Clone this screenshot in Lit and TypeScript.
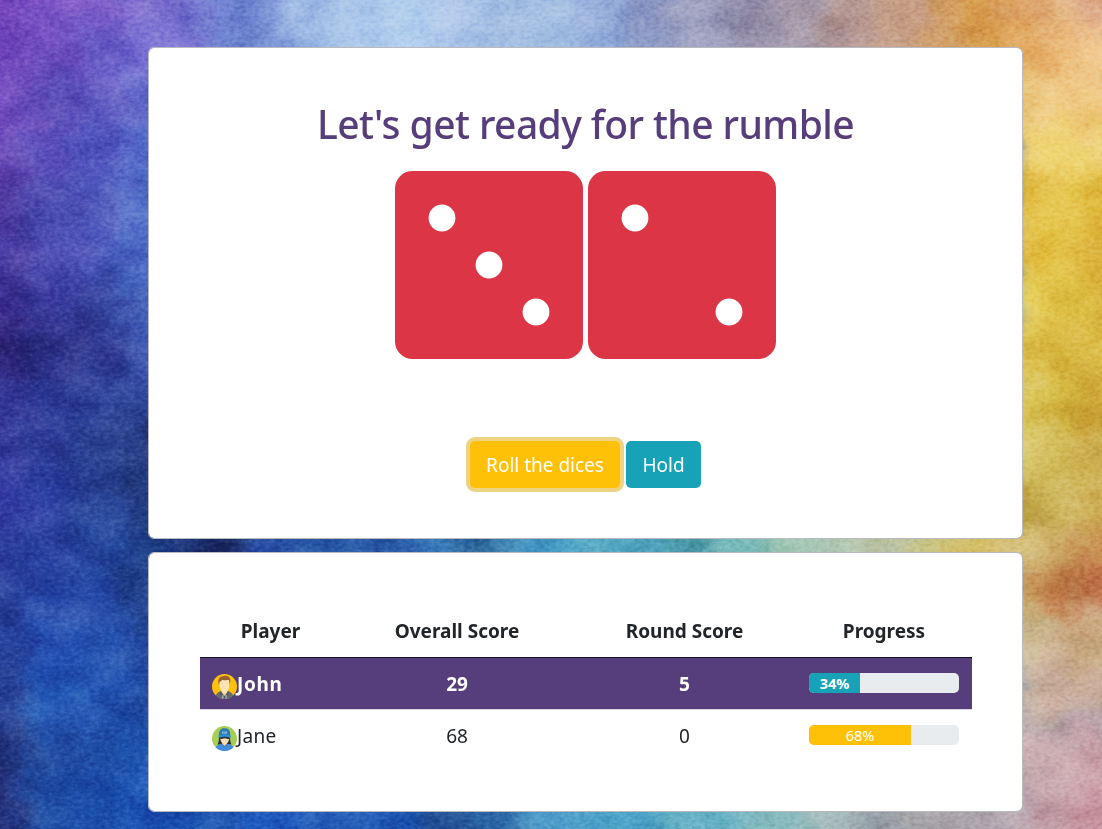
import { LitElement, html, svg, css } from "lit";
import { customElement, property } from "lit/decorators.js";
import { classMap } from "lit/directives/class-map.js";

// Colour washes: each entry is a row of pigment samples at a given height.
const LEFT_X = [0, 50, 100, 150];
const LEFT: [number, string[]][] = [
  [0, ["#7040b8", "#8358c8", "#8464cc", "#8074d0"]],
  [50, ["#6c40b8", "#7050c0", "#6a5cc6", "#7d74d6"]],
  [100, ["#7c54c4", "#5848b4", "#5a54be", "#6068c8"]],
  [150, ["#6a48b8", "#5c50bc", "#5458c0", "#5870cc"]],
  [200, ["#4e38a0", "#5050b4", "#4a54b8", "#5878cc"]],
  [250, ["#4a3ca4", "#5050b4", "#4a58bc", "#5070c8"]],
  [300, ["#3c2c90", "#38389c", "#3846a2", "#4464bc"]],
  [350, ["#30267c", "#2c2e84", "#303a92", "#3c54b0"]],
  [400, ["#303294", "#2c3a98", "#2c4098", "#304a9c"]],
  [450, ["#3840a0", "#2c3c98", "#2a4292", "#22367a"]],
  [500, ["#343ca4", "#2e42a4", "#2a4698", "#223a80"]],
  [550, ["#2c3c9c", "#2a42a0", "#2648a0", "#1e4088"]],
  [600, ["#2a429c", "#2648a8", "#264aa8", "#22428c"]],
  [650, ["#26429c", "#2450b4", "#2452b0", "#2046a0"]],
  [700, ["#223a90", "#245ab8", "#2456b4", "#1e489e"]],
  [750, ["#202f78", "#244ea4", "#2050a8", "#1c54b0"]],
  [800, ["#222e78", "#2050a8", "#1c50ae", "#1c52b4"]],
];
const RIGHT_X = [1020, 1060, 1100];
const RIGHT: [number, string[]][] = [
  [0, ["#dca468", "#e4b888", "#d8a080"]],
  [50, ["#e0a458", "#ecbe7c", "#f0c890"]],
  [100, ["#e8c070", "#f0d090", "#eec880"]],
  [150, ["#ecd070", "#f0d878", "#ecd070"]],
  [200, ["#e0b838", "#e4c64c", "#e0ba3c"]],
  [250, ["#e6c654", "#e2bf3e", "#dab036"]],
  [300, ["#ead664", "#e0c448", "#dab640"]],
  [350, ["#e0c454", "#d6b43c", "#dabc46"]],
  [400, ["#dac456", "#d6ba44", "#cea636"]],
  [450, ["#daca6c", "#d2ba56", "#ccae4e"]],
  [500, ["#c4aa48", "#d0b860", "#ccac50"]],
  [550, ["#d4c078", "#cca864", "#c89050"]],
  [590, ["#c8a464", "#c48450", "#c07048"]],
  [640, ["#c8b890", "#ceb490", "#c8aa80"]],
  [690, ["#ccb8a8", "#ccb0a0", "#ccb0a0"]],
  [750, ["#ccb0b0", "#ccacb0", "#c8a0a8"]],
  [800, ["#bca8b0", "#c49ea8", "#cc9ca8"]],
];
const TOP: [number, string][] = [
  [180, "#7068cc"], [220, "#7084d0"], [260, "#7890d4"], [300, "#9cb8e4"], [350, "#a8c4e8"],
  [400, "#b0ccec"], [450, "#b0c8ea"], [500, "#a4bee2"], [550, "#a0bce0"], [600, "#98b0dc"],
  [650, "#8c98c4"], [700, "#a0a2c0"], [750, "#948eaa"], [800, "#a498a8"], [850, "#b89c98"],
  [900, "#c49c84"], [950, "#d09c60"], [985, "#dca24c"],
];
const MIDDLE: [number, string][] = [
  [180, "#1c3884"], [220, "#1a2862"], [260, "#2448a0"], [330, "#2656a6"], [400, "#2c60ac"],
  [440, "#3478b8"], [475, "#2a6498"], [515, "#4090c0"], [560, "#48a0c4"], [620, "#50a4c0"],
  [680, "#4c9cac"], [735, "#74b8b8"], [780, "#a0c8b8"], [830, "#a8c4b0"], [880, "#bec6a8"],
  [940, "#c8c480"], [985, "#d4b858"],
];
const BOTTOM: [number, string][] = [
  [180, "#1c58b8"], [220, "#1c50ac"], [260, "#205cc0"], [330, "#2056b4"], [400, "#205cb8"],
  [450, "#1e4a90"], [500, "#2c68a8"], [550, "#4898c8"], [620, "#4ca4c8"], [700, "#64b0c4"],
  [780, "#84b8bc"], [830, "#a0b8b8"], [880, "#949ca6"], [930, "#a8a4a8"], [985, "#a8a0a8"],
];

const patch = (x: number, y: number, w: number, h: number, fill: string) =>
  svg`<rect x=${x} y=${y} width=${w} height=${h} fill=${fill}></rect>`;

const band = (y: number, h: number, stops: [number, string][]) =>
  stops.map(([x, fill], i) => {
    const next = i + 1 < stops.length ? stops[i + 1][0] : 1010;
    const prev = i > 0 ? stops[i - 1][0] : 160;
    const from = (prev + x) / 2;
    return patch(from, y, (x + next) / 2 - from + 2, h, fill);
  });

@customElement("watercolor-backdrop")
export class WatercolorBackdrop extends LitElement {
  static styles = css`
    :host { display: block; overflow: hidden; }
    .paint { display: block; width: 1102px; height: 829px; }
    .blotch { mix-blend-mode: soft-light; opacity: 0.3; }
    .grain { mix-blend-mode: soft-light; opacity: 0.25; }
  `;
  render() {
    return html`<svg class="paint" viewBox="0 0 1102 829" preserveAspectRatio="none" aria-hidden="true">
      <defs>
        <filter id="bleed" x="-100" y="-100" width="1302" height="1029" filterUnits="userSpaceOnUse" color-interpolation-filters="sRGB">
          <feGaussianBlur stdDeviation="13" result="soft"></feGaussianBlur>
          <feTurbulence type="fractalNoise" baseFrequency="0.03" numOctaves="4" seed="8" result="warp"></feTurbulence>
          <feDisplacementMap in="soft" in2="warp" scale="45" xChannelSelector="R" yChannelSelector="G"></feDisplacementMap>
        </filter>
        <filter id="blotch" x="0" y="0" width="100%" height="100%" color-interpolation-filters="sRGB">
          <feTurbulence type="fractalNoise" baseFrequency="0.022 0.03" numOctaves="4" seed="21"></feTurbulence>
          <feColorMatrix values="1.6 0 0 0 -0.3  1.6 0 0 0 -0.3  1.6 0 0 0 -0.3  0 0 0 0 1"></feColorMatrix>
        </filter>
        <filter id="grain" x="0" y="0" width="100%" height="100%" color-interpolation-filters="sRGB">
          <feTurbulence type="fractalNoise" baseFrequency="0.2 0.3" numOctaves="3" seed="4"></feTurbulence>
          <feColorMatrix values="1.6 0 0 0 -0.3  1.6 0 0 0 -0.3  1.6 0 0 0 -0.3  0 0 0 0 1"></feColorMatrix>
        </filter>
      </defs>
      <g filter="url(#bleed)">
        <rect x="-100" y="-100" width="1302" height="1029" fill="#4c78b8"></rect>
        ${band(-100, 240, TOP)} ${band(440, 210, MIDDLE)} ${band(730, 200, BOTTOM)}
        ${LEFT.map(([y, row]) => row.map((fill, i) =>
          patch(i ? LEFT_X[i] - 25 : -100, y ? y - 25 : -100, i ? 50 : 126, y === 800 ? 160 : y ? 51 : 126, fill)))}
        ${RIGHT.map(([y, row]) => row.map((fill, i) =>
          patch(RIGHT_X[i] - 20, y ? y - 25 : -100, i === 2 ? 120 : 41, y === 800 ? 160 : y ? 56 : 126, fill)))}
      </g>
      <rect class="blotch" width="1102" height="829" filter="url(#blotch)"></rect>
      <rect class="grain" width="1102" height="829" filter="url(#grain)"></rect>
    </svg>`;
  }
}

const PIPS: Record<number, [number, number][]> = {
  1: [[94, 94]],
  2: [[47, 47], [141, 141]],
  3: [[47, 47], [94, 94], [141, 141]],
  4: [[47, 47], [141, 47], [47, 141], [141, 141]],
  5: [[47, 47], [141, 47], [94, 94], [47, 141], [141, 141]],
  6: [[47, 47], [141, 47], [47, 94], [141, 94], [47, 141], [141, 141]],
};

@customElement("game-die")
export class GameDie extends LitElement {
  @property({ type: Number }) value = 1;
  static styles = css`
    :host { display: block; }
    .die { display: block; width: 188px; height: 188px; }
  `;
  render() {
    return html`<svg class="die" viewBox="0 0 188 188">
      <rect width="188" height="188" rx="17.5" fill="#dc3545"></rect>
      ${PIPS[this.value].map(([x, y]) => svg`<circle cx=${x} cy=${y} r="13.4" fill="#fff"></circle>`)}
    </svg>`;
  }
}

const johnAvatar = svg`
  <circle cx="12.5" cy="12.5" r="12.5" fill="#ffc20a"></circle>
  <path d="M3.8 21.4C4.700 18.700 7 17.800 9.500 16.800h6c2.500 1 4.800 1.900 5.700 4.600A12.500 12.500 0 0 1 3.800 21.400Z" fill="#646c70"></path>
  <path d="M9.400 14h6v4.900l-3 3.200-3-3.200Z" fill="#f6d5a6"></path>
  <path d="M9 17.600l3.500 4.700 3.500-4.700.9 1.700-2.800 4.400h-3.200L8.100 19.300Z" fill="#4c565b"></path>
  <path d="M6.700 10.500C5.500 4.800 7.700 2.400 10.300 2.500c2.100-1.700 8.800-1 8.100 4.500l-.7 3.500Z" fill="#966033"></path>
  <path d="M7.400 7.800c1.800-.5 2.300-1.500 3-2.100 1.800.8 4.900.4 6.600.4l.6 4.400c-.2 4.600-2.500 8-5.100 8s-4.900-3.400-5.100-8Z" fill="#ffe3b6"></path>
  <path d="M10.900 21v3.500M14.100 21v3.500" stroke="#eee" stroke-width=".8"></path>`;

const janeAvatar = svg`
  <circle cx="12.5" cy="12.5" r="12.5" fill="#a7cf55"></circle>
  <path d="M7 10h11c.1 4 .3 6.200 1.500 8.500H5.500C6.800 16.200 7 14 7 10Z" fill="#293036"></path>
  <path d="M3.600 21.200c1.200-2.400 4-3 6.300-3.500h5.200c2.300.5 5.100 1.100 6.300 3.500a12.500 12.500 0 0 1-17.800 0Z" fill="#438bdc"></path>
  <path d="M10.400 15.500h4.200v2.600l-2.100 2.200-2.100-2.200Z" fill="#f0c79a"></path>
  <path d="M8.200 11.200h9.100c0 4-2.100 7-4.600 7s-4.500-3-4.500-7Z" fill="#ffe0b4"></path>
  <path d="M8.200 11h9.100v2.200l-4.600-1-4.500 1Z" fill="#293036"></path>
  <path d="M7 9.800C6.700 4.500 8.700 2.300 12.600 2.300s5.900 2.200 5.600 7.500Z" fill="#2878ba"></path>
  <path d="M6.300 9.400c3.800-1.200 8.800-1.200 12.600 0l-.3 2.300c-3.700-1.400-8.300-1.400-12 0Z" fill="#2e91d2"></path>
  <path d="M10.600 5.300v2.600M12 5.300v2.600M13.300 5.300v2.600M14.700 5.300v2.300" stroke="#b9dcf2" stroke-width=".7"></path>
  <path d="M9.400 18.300l3.100 2.400 3.100-2.400" fill="none" stroke="#2c73be" stroke-width=".8"></path>`;

interface Player {
  name: string;
  avatar: unknown;
  overall: number;
  round: number;
  progress: number;
  tone: "info" | "warning";
  active: boolean;
}

@customElement("app-root")
export class AppRoot extends LitElement {
  @property({ attribute: false }) dice = [3, 2];
  @property({ attribute: false }) players: Player[] = [
    { name: "John", avatar: johnAvatar, overall: 29, round: 5, progress: 34, tone: "info", active: true },
    { name: "Jane", avatar: janeAvatar, overall: 68, round: 0, progress: 68, tone: "warning", active: false },
  ];

  static styles = css`
    :host {
      display: grid;
      grid-template: 829px / 1102px;
      overflow: hidden;
      font-family: "Noto Sans", "Open Sans", sans-serif;
      font-size: 19px;
      color: #212529;
    }
    .backdrop, .page { grid-area: 1 / 1; }
    .page {
      display: flex;
      flex-direction: column;
      gap: 13px;
      padding: 47px 79px 0 148px;
      z-index: 1;
    }
    .card {
      box-sizing: border-box;
      background: #fff;
      background-clip: padding-box;
      border: 1px solid #b9b9c0;
      border-radius: 6px;
    }
    .arena {
      height: 492px;
      display: flex;
      flex-direction: column;
      align-items: center;
      padding-top: 52px;
    }
    .title {
      margin: 0;
      height: 48px;
      line-height: 48px;
      font-size: 39px;
      font-weight: 500;
      letter-spacing: -0.57px;
      color: #563d7c;
      white-space: nowrap;
    }
    .dice { display: flex; gap: 5px; margin-top: 23px; }
    .actions { display: flex; gap: 6px; margin-top: 82px; width: 231px; }
    .btn {
      box-sizing: border-box;
      height: 47px;
      padding: 0;
      border: 0;
      border-radius: 5px;
      font: inherit;
      color: #fff;
      white-space: nowrap;
    }
    .roll { width: 150px; background: #ffc107; box-shadow: 0 0 0 4px #edd382; }
    .hold { width: 75px; background: #17a2b8; }
    .board { height: 260px; padding: 52px 50px 0 51px; }
    .row {
      display: grid;
      grid-template-columns: 141px 232px 223px 176px;
      width: 772px;
      align-items: center;
      text-align: center;
      height: 51px;
      border-bottom: 1px solid transparent;
      white-space: nowrap;
    }
    .head { font-weight: 700; height: 52px; border-bottom-color: #15121c; }
    .active { font-weight: 700; background: #563d7c; background-clip: padding-box; color: #fff; border-bottom-color: #dbd5e3; }
    .player { display: flex; align-items: center; padding-left: 12px; }
    .name { letter-spacing: 0.3px; }
    .active .name { letter-spacing: 0.7px; }
    .avatar { flex: none; display: block; width: 25px; height: 25px; margin-top: 5px; }
    .bar {
      display: flex;
      width: 150px;
      height: 20px;
      margin: 0 13px 2px;
      border-radius: 5px;
      background: #e9ecef;
      overflow: hidden;
      font-size: 14.5px;
      line-height: 20px;
      color: #fff;
    }
    .fill { text-align: center; }
    .info { background: #17a2b8; }
    .warning { background: #ffc107; }
  `;

  render() {
    return html`
      <watercolor-backdrop class="backdrop"></watercolor-backdrop>
      <main class="page">
        <section class="card arena">
          <h1 class="title">Let's get ready for the rumble</h1>
          <div class="dice">${this.dice.map((v) => html`<game-die .value=${v}></game-die>`)}</div>
          <div class="actions">
            <button class="btn roll">Roll the dices</button>
            <button class="btn hold">Hold</button>
          </div>
        </section>
        <section class="card board">
          <div class="row head">
            <span>Player</span><span>Overall Score</span><span>Round Score</span><span>Progress</span>
          </div>
          ${this.players.map((p) => html`
            <div class=${classMap({ row: true, active: p.active })}>
              <div class="player"><svg class="avatar" viewBox="0 0 25 25">${p.avatar}</svg><span class="name">${p.name}</span></div>
              <span>${p.overall}</span>
              <span>${p.round}</span>
              <div class="bar"><div class="fill ${p.tone}" style="width:${p.progress}%">${p.progress}%</div></div>
            </div>`)}
        </section>
      </main>`;
  }
}
